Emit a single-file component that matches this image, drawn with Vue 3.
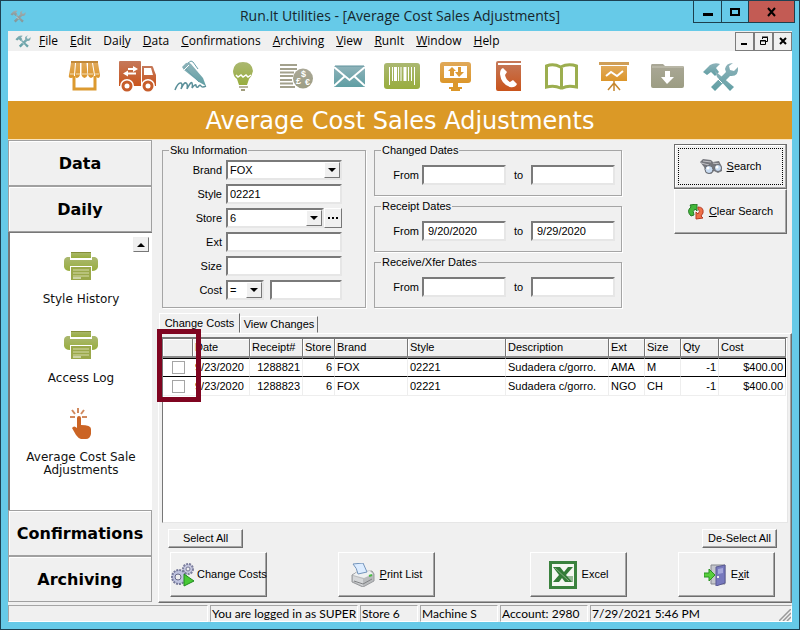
<script setup>
import { h, ref } from 'vue'

// Renders a caption whose access key is marked by a preceding "&".
const Caption = (props) => {
  const at = props.text.indexOf('&')
  if (at < 0) return h('span', props.text)
  return h('span', [props.text.slice(0, at), h('u', props.text[at + 1]), props.text.slice(at + 2)])
}
Caption.props = ['text']

const menus = ['&File', '&Edit', 'Dai&ly', '&Data', '&Confirmations', '&Archiving', '&View', '&RunIt', '&Window', '&Help']

const brand = ref('FOX')
const style = ref('02221')
const store = ref('6')
const ext = ref('')
const size = ref('')
const operator = ref('=')
const cost = ref('')

const ranges = ref([
  { id: 'changed', title: 'Changed Dates', from: '', to: '' },
  { id: 'receipt', title: 'Receipt Dates', from: '9/20/2020', to: '9/29/2020' },
  { id: 'xfer', title: 'Receive/Xfer Dates', from: '', to: '' },
])

const columns = [
  { key: 'pick', title: '', cls: 'c-pick' },
  { key: 'date', title: 'Date', cls: 'c-date' },
  { key: 'receipt', title: 'Receipt#', cls: 'c-receipt num' },
  { key: 'store', title: 'Store', cls: 'c-store num' },
  { key: 'brand', title: 'Brand', cls: 'c-brand' },
  { key: 'style', title: 'Style', cls: 'c-style' },
  { key: 'description', title: 'Description', cls: 'c-desc' },
  { key: 'ext', title: 'Ext', cls: 'c-ext' },
  { key: 'size', title: 'Size', cls: 'c-size' },
  { key: 'qty', title: 'Qty', cls: 'c-qty num' },
  { key: 'cost', title: 'Cost', cls: 'c-cost num' },
]

const rows = ref([
  { picked: false, date: '9/23/2020', receipt: '1288821', store: '6', brand: 'FOX', style: '02221', description: 'Sudadera c/gorro.', ext: 'AMA', size: 'M', qty: '-1', cost: '$400.00' },
  { picked: false, date: '9/23/2020', receipt: '1288823', store: '6', brand: 'FOX', style: '02221', description: 'Sudadera c/gorro.', ext: 'NGO', size: 'CH', qty: '-1', cost: '$400.00' },
])

const pickAll = (value) => rows.value.forEach((row) => { row.picked = value })
const clearSearch = () => {
  style.value = ''
  ext.value = ''
  size.value = ''
  cost.value = ''
  ranges.value.forEach((r) => { r.from = ''; r.to = '' })
}
</script>

<template>
  <div class="window">
    <svg class="defs" width="0" height="0" aria-hidden="true">
      <defs>
        <linearGradient id="gOrange" x1="0" y1="0" x2="0" y2="1"><stop offset="0" stop-color="#e0a95a" /><stop offset="1" stop-color="#dc962a" /></linearGradient>
        <linearGradient id="gRust" x1="0" y1="0" x2="0" y2="1"><stop offset="0" stop-color="#c5795a" /><stop offset="1" stop-color="#c9541c" /></linearGradient>
        <linearGradient id="gTeal" x1="0" y1="0" x2="0" y2="1"><stop offset="0" stop-color="#8fb3ba" /><stop offset="1" stop-color="#5f9ea3" /></linearGradient>
        <linearGradient id="gGreen" x1="0" y1="0" x2="0" y2="1"><stop offset="0" stop-color="#abb871" /><stop offset="1" stop-color="#98ad3e" /></linearGradient>
        <linearGradient id="gStone" x1="0" y1="0" x2="0" y2="1"><stop offset="0" stop-color="#aaa897" /><stop offset="1" stop-color="#9c9d83" /></linearGradient>
        <symbol id="tools" viewBox="0 0 37 32">
          <path d="M1 12 8 5q5-3 10-1l-4 4 3 4-4 4-4-4-4 3z" fill="url(#gTeal)" />
          <path d="m13 11 6 5 13 11-4 4L15 17z" fill="url(#gTeal)" />
          <path d="M31 3q-7 0-8 6l1 3L9 27l4 4 15-15q9 1 8-9l-4 4-4-1-1-4z" fill="url(#gTeal)" />
          <path d="m15 18 5 5" stroke="#fff" stroke-width="1" />
        </symbol>
        <symbol id="greenPrinter" viewBox="0 0 34 28">
          <path d="M7 0h20v6H7z" fill="url(#gGreen)" />
          <path d="M7 0h20v1H7z" fill="#858f38" />
          <path d="M3 5h3v3h22V5h3q3 1 3 4v6q-1 4-6 4v-5H6v5q-5 0-6-4V9q0-3 3-4z" fill="url(#gGreen)" />
          <path d="M7 15h20v13H7z" fill="#9aa84a" />
          <path d="M9 18h16M9 21h16M9 24h16" stroke="#d6dba9" />
          <path d="M9 26h8" stroke="#fff" />
        </symbol>
      </defs>
    </svg>

    <header class="titlebar">
      <svg class="app-icon faded" width="16" height="14"><use href="#tools" /></svg>
      <h1>Run.It Utilities - [Average Cost Sales Adjustments]</h1>
      <div class="win-buttons">
        <button type="button" aria-label="Minimize"><svg width="12" height="12"><path d="M1 7h10v3H1z" fill="#000" /></svg></button>
        <button type="button" aria-label="Maximize"><svg width="12" height="12"><path d="M2 3h8v6H2z" fill="none" stroke="#000" stroke-width="2" /></svg></button>
        <button type="button" class="close" aria-label="Close"><svg width="12" height="12"><path d="m2 2 7 8M9 2l-7 8" stroke="#000" stroke-width="2" /></svg></button>
      </div>
    </header>

    <nav class="menubar">
      <svg class="app-icon" width="16" height="14"><use href="#tools" /></svg>
      <button v-for="m in menus" :key="m" type="button"><Caption :text="m" /></button>
      <div class="mdi">
        <button type="button" aria-label="Minimize document"><svg width="10" height="10"><path d="M1 7h6v2H1z" /></svg></button>
        <button type="button" aria-label="Restore document"><svg width="10" height="10"><path d="M3.500 3V1.500h5v4H7M3 1h6M1.500 4.500h5v4h-5zM1 5h6" fill="none" stroke="#000" /></svg></button>
        <button type="button" aria-label="Close document"><svg width="10" height="10"><path d="m2 2 6 6M8 2 2 8" stroke="#000" stroke-width="2" /></svg></button>
      </div>
    </nav>

    <div class="toolbar">
      <button type="button" aria-label="Store">
        <svg viewBox="0 0 37 32"><path d="M8 16v13h21V16" fill="none" stroke="#dc9a30" stroke-width="3" /><path d="M5 1h27v2H5z" fill="#c1893a" /><path d="M5 3h4l-1 12q0 3-3 3t-2-3zM10 3h4v12q-1 3-3 3t-2-3zM15.500 3h5l1 12q-1 3-3 3t-3-3zM22 3h4l2 12q-1 3-3 3t-3-3zM27 3h5l2 12q0 3-2 3t-3-3z" fill="url(#gOrange)" /><path d="M4 14h4M10 14h4M16 14h5M22 14h5M29 14h4" stroke="#f4dfb8" /></svg>
      </button>
      <button type="button" aria-label="Shipping">
        <svg viewBox="0 0 37 32"><path d="M1 1h20q1 0 1 1v24H0V2q0-1 1-1z" fill="url(#gRust)" /><path d="M23 6h10q1 0 2 4l2 5v11H23z" fill="url(#gRust)" /><path d="M25 8h7l2 7h-9z" fill="#fff" /><circle cx="8" cy="26" r="7" fill="#fff" /><circle cx="29" cy="26" r="7" fill="#fff" /><circle cx="8" cy="26" r="4" fill="#fff" stroke="#c75d2b" stroke-width="3" /><circle cx="29" cy="26" r="4" fill="#fff" stroke="#c75d2b" stroke-width="3" /><path d="M9 8h5V6l5 3-5 3v-2H9zM17 12.500H9v-2l-5 3 5 3v-2h8z" fill="#fff" /></svg>
      </button>
      <button type="button" aria-label="Sign">
        <svg viewBox="0 0 37 32"><path d="m10 7 4-4q3-1 5 1l12 14 3 8-7-4L12 10z" fill="url(#gTeal)" /><path d="m13 8 14 14M16 3l3-2 2 1 5 7" fill="none" stroke="#699faa" stroke-width="1" /><path d="m12 10 5-5" stroke="#fff" /><path d="M3 30q3-8 6-7 2 1 0 6 3-7 5-6 2 1 1 6 4-8 5-6 1 2 0 5 3-4 4-3 0 3 2 2 2-3 3-1 1 2 5 0" fill="none" stroke="#5a8f99" stroke-width="1.500" /></svg>
      </button>
      <button type="button" aria-label="Ideas">
        <svg viewBox="0 0 37 32"><path d="M18 2q9 0 10 9-1 5-4 8l-2 6h-8l-2-6q-4-3-4-8 1-9 10-9z" fill="url(#gGreen)" /><path d="m11 15 2 2 3-2 2 2 3-2 2 2 3-2" fill="none" stroke="#fff" stroke-width="1.500" /><path d="M14 27h9" stroke="#a09d7c" stroke-width="1.500" /><path d="M16 30h4" stroke="#a09d7c" stroke-width="2" /></svg>
      </button>
      <button type="button" aria-label="Currency">
        <svg viewBox="0 0 37 32"><path d="M2 5h17M2 9h17M2 12.500h14M2 16h13M2 20h12M2 23.500h13M2 27h15" stroke="#a3a18d" stroke-width="2" /><circle cx="25" cy="18.500" r="10" fill="url(#gStone)" /><g fill="#fff" font-family="Liberation Sans, sans-serif" font-weight="bold" font-size="9"><text x="23" y="17">$</text><text x="18" y="24">£</text><text x="27" y="25">€</text></g></svg>
      </button>
      <button type="button" aria-label="Mail">
        <svg viewBox="0 0 37 32"><path d="M3 6h31v21H3z" fill="url(#gTeal)" /><path d="m3 7 15.500 13L34 7M3 26l11-10M34 26 23 16" fill="none" stroke="#fff" stroke-width="2" /><path d="M4 6h29" stroke="#5e929c" /></svg>
      </button>
      <button type="button" aria-label="Barcode">
        <svg viewBox="0 0 37 32"><rect y="3" width="36" height="26" rx="3" fill="url(#gGreen)" /><path d="M5.500 7v18M30.500 7v18" stroke="#fff" /><path d="M8.500 7v14M14.500 7v14M17 7v14M27.500 7v14M24.500 7v14" stroke="#fff" /><path d="M11.500 7v14M21 7v14" stroke="#fff" stroke-width="3" /></svg>
      </button>
      <button type="button" aria-label="Sync">
        <svg viewBox="0 0 37 32"><rect x="3" y="2" width="31" height="21" rx="3" fill="url(#gOrange)" /><path d="M7 6h23v12H7z" fill="#fff" /><path d="M16 23h5v4h4v2H12v-2h4zM14 28h9v3h-9z" fill="#dc9729" /><path d="m15 7 4 4h-2v5h-4v-5h-2zM21 7h3v5h3l-5 5-4-5h3z" fill="#dc9a35" /></svg>
      </button>
      <button type="button" aria-label="Phone book">
        <svg viewBox="0 0 37 32"><path d="M8 1h23v2H8v1h23v27H8q-2 0-2-2V3q0-2 2-2z" fill="url(#gRust)" /><path d="M8 4.500h23" stroke="#fff" /><path d="m13 8 4 4-2 3q1 5 5 7l3-2 4 4q-2 4-7 3-9-3-10-13 0-5 3-6z" fill="#fff" /></svg>
      </button>
      <button type="button" aria-label="Catalog">
        <svg viewBox="0 0 37 32"><path d="M3.500 6q7-3 14 1 8-4 16-1v21q-9-2-14 1h-2q-6-3-14-1z" fill="#fff" stroke="#9cae4f" stroke-width="3" /><path d="M18.500 8v20" stroke="#9cae4f" stroke-width="3" /></svg>
      </button>
      <button type="button" aria-label="Presentation">
        <svg viewBox="0 0 37 32"><path d="M3 2h30v3H3z" fill="#cf9e57" /><path d="M5 6h26v15H5z" fill="url(#gOrange)" /><path d="m10 16 5-4 6 4 6-5" fill="none" stroke="#fff" stroke-width="2" /><path d="M18 21v10M18 23l-6 7M18 23l6 7" stroke="#c5862e" stroke-width="1.500" /></svg>
      </button>
      <button type="button" aria-label="Download">
        <svg viewBox="0 0 37 32"><path d="M3 4h11l2 2h18q1 0 1 2v18q0 2-2 2H4q-2 0-2-2V6q0-2 1-2z" fill="url(#gStone)" /><path d="M3 7h31" stroke="#c8c6b6" /><path d="M16 11h5v6h4l-7 7-6-7h4z" fill="#fff" /></svg>
      </button>
      <button type="button" aria-label="Tools"><svg><use href="#tools" /></svg></button>
    </div>

    <h2 class="banner">Average Cost Sales Adjustments</h2>

    <div class="body">
      <aside class="sidebar">
        <button type="button" class="section">Data</button>
        <button type="button" class="section">Daily</button>
        <div class="shortcuts">
          <button type="button" class="scroll-up" aria-label="Scroll up"><svg width="8" height="4"><path d="M4 0 8 4H0z" /></svg></button>
          <a href="#"><svg width="34" height="32" viewBox="0 -2 34 32"><use href="#greenPrinter" width="34" height="28" /></svg>Style History</a>
          <a href="#"><svg width="34" height="32" viewBox="0 -2 34 32"><use href="#greenPrinter" width="34" height="28" /></svg>Access Log</a>
          <a href="#">
            <svg width="22" height="32" viewBox="0 0 22 32"><path d="M7 10q0-2 2-2t2 2v7q10 0 10 4v5q-1 5-5 5h-5q-3-1-5-4l-4-7q2-3 5 0z" fill="#cb6425" /><path d="M8 0v5M2 2l3 4M14 2l-3 4M0 9h5M12 9h5" stroke="#d18a5f" stroke-width="2" /></svg>
            Average Cost Sale Adjustments
          </a>
        </div>
        <button type="button" class="section">Confirmations</button>
        <button type="button" class="section">Archiving</button>
      </aside>

      <main>
        <form class="search" @submit.prevent>
          <fieldset class="sku">
            <legend>Sku Information</legend>
            <label for="brand">Brand</label>
            <div class="combo field">
              <select id="brand" v-model="brand"><option>FOX</option></select>
              <span class="arrow"><svg width="8" height="4"><path d="M0 0h8L4 4z" /></svg></span>
            </div>
            <label for="style">Style</label>
            <input id="style" v-model="style" class="field" type="text">
            <label for="store">Store</label>
            <div class="with-more">
              <div class="combo field">
                <select id="store" v-model="store"><option>6</option></select>
                <span class="arrow"><svg width="8" height="4"><path d="M0 0h8L4 4z" /></svg></span>
              </div>
              <button type="button" class="more" aria-label="Browse stores"><svg width="10" height="2"><path d="M0 0h2v2H0zM4 0h2v2H4zM8 0h2v2H8z" /></svg></button>
            </div>
            <label for="ext">Ext</label>
            <input id="ext" v-model="ext" class="field" type="text">
            <label for="size">Size</label>
            <input id="size" v-model="size" class="field" type="text">
            <label for="cost">Cost</label>
            <div class="cost">
              <div class="combo field">
                <select v-model="operator" aria-label="Cost comparison"><option>=</option></select>
                <span class="arrow"><svg width="8" height="4"><path d="M0 0h8L4 4z" /></svg></span>
              </div>
              <input id="cost" v-model="cost" class="field" type="text">
            </div>
          </fieldset>

          <div class="ranges">
            <fieldset v-for="r in ranges" :key="r.id" class="range">
              <legend>{{ r.title }}</legend>
              <label :for="r.id + '-from'">From</label>
              <input :id="r.id + '-from'" v-model="r.from" class="field" type="text">
              <label :for="r.id + '-to'" class="to">to</label>
              <input :id="r.id + '-to'" v-model="r.to" class="field" type="text">
            </fieldset>
          </div>

          <div class="actions">
            <button type="submit" class="btn default">
              <svg width="22" height="16" viewBox="0 0 22 16"><path d="M0 3 3 0l8 1 2 2 6-1 3 6v4l-4 2-4-2-3 3-5-1-2-6z" fill="#76777d" /><path d="m3 2 8 1M1 4l8 2M13 4l6 1" stroke="#c4c4c8" /><circle cx="9" cy="10.500" r="4" fill="#c9dcf2" stroke="#66686e" /><circle cx="18" cy="9" r="3.500" fill="#c9dcf2" stroke="#66686e" /><circle cx="8" cy="9" r="1.500" fill="#fff" /><circle cx="17" cy="8" r="1.500" fill="#fff" /></svg>
              <Caption text="&Search" />
            </button>
            <button type="button" class="btn" @click="clearSearch">
              <svg width="16" height="16" viewBox="0 0 16 16"><path d="M3 12Q-2 7 3 3L2 1l7-1v7L7 5Q4 7 6 11z" fill="#43b73b" stroke="#267a26" /><path d="M10 3q6 0 5 6l-2 3 2 2-7 1V8l2 2q3-3 0-5z" fill="#ee7048" stroke="#b63c24" /></svg>
              <Caption text="&Clear Search" />
            </button>
          </div>
        </form>

        <div class="tabs" role="tablist">
          <button type="button" role="tab" aria-selected="true" class="active">Change Costs</button>
          <button type="button" role="tab" aria-selected="false">View Changes</button>
        </div>

        <section class="panel">
          <div class="grid">
            <table>
              <thead>
                <tr><th v-for="c in columns" :key="c.key" :class="c.cls">{{ c.title }}</th></tr>
              </thead>
              <tbody>
                <tr v-for="(row, i) in rows" :key="row.receipt" :class="{ current: i === 0 }">
                  <td v-for="c in columns" :key="c.key" :class="c.cls">
                    <input v-if="c.key === 'pick'" v-model="row.picked" type="checkbox" :aria-label="'Select receipt ' + row.receipt">
                    <template v-else>{{ row[c.key] }}</template>
                  </td>
                </tr>
              </tbody>
            </table>
            <div class="highlight"></div>
          </div>

          <div class="pickers">
            <button type="button" class="btn small" @click="pickAll(true)">Select All</button>
            <button type="button" class="btn small" @click="pickAll(false)">De-Select All</button>
          </div>

          <div class="commands">
            <button type="button" class="btn tight">
              <svg width="24" height="24" viewBox="0 0 24 24"><circle cx="17" cy="6" r="5" fill="#c5c7df" stroke="#7d7f9e" stroke-width="2" stroke-dasharray="2 1" /><circle cx="17" cy="6" r="2" fill="#f0f0f0" stroke="#777996" /><circle cx="8" cy="14" r="7" fill="#bfc3df" stroke="#777a9b" stroke-width="2" stroke-dasharray="2 1" /><circle cx="7" cy="14" r="3" fill="#eee" stroke="#666989" /><path d="m13 11 10 7-10 5z" fill="#48c936" stroke="#218b20" /></svg>
              <Caption text="Change Costs" />
            </button>
            <button type="button" class="btn">
              <svg width="24" height="24" viewBox="0 0 24 24"><path d="m1 12 5-3 15-1 2 3v7l-11 6-11-5z" fill="#b9bbbd" stroke="#999b9e" /><path d="m2 12 11 3 9-4-3-3-13 1z" fill="#eef0f1" /><path d="m2 13 10 3v7L2 18z" fill="#d5d7d9" /><path d="m2 1 10-1 4 9-9 2Q6 5 2 1z" fill="#dcecff" stroke="#7394bb" /><path d="m3 18 9 3 9-5" fill="none" stroke="#808284" /><path d="m18 13 3-1" stroke="#4aba44" stroke-width="2" /></svg>
              <Caption text="&Print List" />
            </button>
            <button type="button" class="btn">
              <svg width="28" height="28" viewBox="0 0 28 28"><path d="M1.500 1.500h25v25h-25z" fill="#f5f7f2" stroke="#3b823e" stroke-width="3" /><path d="M4 6h7l4 5 4-5h5l-7 8 6 7h-7l-3-4-3 4H4l6-7z" fill="#347c38" /><path d="m6 7 14 13" stroke="#83ae80" /><path d="M18 16h6M20 18h4M21 20h3" stroke="#347c38" /></svg>
              <Caption text="Excel" />
            </button>
            <button type="button" class="btn">
              <svg width="22" height="22" viewBox="0 0 22 22"><path d="M7 1h14v19H7z" fill="#c4c6cc" stroke="#85878f" /><path d="m12 3 9-2v18l-9 3z" fill="#7779bd" stroke="#5b5b94" /><path d="m14 5 5-1v5l-5 1z" fill="#a5a7db" /><path d="M14 12v2" stroke="#eee" stroke-width="2" /><path d="M0 9h5V5l6 6-6 6v-4H0z" fill="#58ce3c" stroke="#299323" /></svg>
              <Caption text="E&xit" />
            </button>
          </div>
        </section>
      </main>
    </div>

    <footer class="status">
      <span class="s-blank"></span>
      <span class="s-user">You are logged in as SUPER</span>
      <span class="s-store">Store 6</span>
      <span class="s-machine">Machine S</span>
      <span class="s-account">Account: 2980</span>
      <span class="s-time">7/29/2021 5:46 PM<svg width="12" height="12"><path d="M0 12 12 0M4 12l8-8M8 12l4-4" stroke="#999" stroke-width="1.500" /></svg></span>
    </footer>
  </div>
</template>

<style>
body {
  margin: 0;
}
</style>

<style scoped>
* {
  box-sizing: border-box;
}
button,
input,
select {
  margin: 0;
  padding: 0;
  border: 0;
  background: none;
  border-radius: 0;
  color: inherit;
  font: inherit;
  appearance: none;
  outline: none;
}
svg {
  flex: none;
  display: block;
}
.defs {
  position: absolute;
}
.window {
  display: flex;
  flex-direction: column;
  min-height: 100vh;
  padding: 0 7px 7px;
  border: 1px solid #1d4152;
  background: #66cae8;
  color: #000;
  font: 11px/13px "Liberation Sans", Arial, sans-serif;
}
.titlebar {
  display: grid;
  grid-template-columns: 1fr auto 1fr;
  height: 30px;
}
.titlebar .app-icon {
  margin: 8px 0 0 2px;
}
.faded {
  filter: grayscale(0.7);
}
h1 {
  margin: 0;
  color: #17262c;
  font: 14px/30px "Open Sans", "Noto Sans", sans-serif;
}
.win-buttons {
  display: flex;
  justify-self: end;
  align-self: start;
  margin-right: -3px;
  border: 1px solid #1d3f4d;
  border-top: 0;
}
.win-buttons button {
  display: grid;
  place-items: center;
  width: 27px;
  height: 21px;
}
.win-buttons button + button {
  border-left: 1px solid #1d3f4d;
}
.win-buttons .close {
  width: 46px;
  background: #c35b54;
}
.menubar {
  display: flex;
  align-items: center;
  gap: 12px;
  height: 20px;
  padding-left: 7px;
  background: #f0f0f0;
  font: 12px/20px "Open Sans", "Noto Sans", sans-serif;
}
.menubar .app-icon {
  margin-right: -4px;
}
u {
  text-underline-offset: 2px;
}
.mdi {
  display: flex;
  margin-left: auto;
}
.mdi button {
  display: grid;
  place-items: center;
  width: 19px;
  height: 19px;
  border: 1px solid #7c7c7c;
}
.toolbar {
  display: flex;
  height: 50px;
  padding-left: 50px;
  background: #fff;
}
.toolbar button {
  display: grid;
  place-items: center;
  width: 53px;
}
.toolbar svg {
  width: 37px;
  height: 32px;
}
.banner {
  margin: 0;
  padding-top: 2px;
  background: #db9926;
  color: #fff;
  font: 24px/36px "DejaVu Sans", Verdana, sans-serif;
  text-align: center;
  border-bottom: 1px solid #f9e4bd;
}
.body {
  display: flex;
  flex: 1;
  gap: 6px;
  background: #f0f0f0;
}
.sidebar {
  display: flex;
  flex-direction: column;
  width: 144px;
  margin-bottom: 2px;
  font-family: "DejaVu Sans", Verdana, sans-serif;
}
.section {
  height: 46px;
  border: 1px solid #a0a0a0;
  box-shadow: inset 1px 1px #fff;
  font-size: 16px;
  font-weight: bold;
}
.shortcuts {
  position: relative;
  display: flex;
  flex: 1;
  flex-direction: column;
  align-items: center;
  gap: 23px;
  padding: 17px 12px;
  border-left: 2px solid #777;
  border-top: 1px solid #777;
  background: #fff;
  font-size: 12px;
}
.shortcuts a {
  display: flex;
  flex-direction: column;
  align-items: center;
  gap: 11px;
  color: #111;
  text-align: center;
  text-decoration: none;
}
.scroll-up {
  position: absolute;
  top: 4px;
  right: 3px;
  display: grid;
  place-items: center;
  width: 16px;
  height: 15px;
  border: 1px solid;
  border-color: #eee #777 #777 #eee;
  background: #f0f0f0;
}
main {
  display: flex;
  flex: 1;
  flex-direction: column;
  min-width: 0;
}
.search {
  display: flex;
  gap: 8px;
  padding: 4px 5px 0 4px;
}
fieldset {
  min-width: 0;
  margin: 0;
  padding: 0;
  border: 1px solid #a5a5a5;
  box-shadow: 1px 1px #fff;
}
legend {
  margin-left: 6px;
  padding: 0 1px;
}
.sku {
  display: grid;
  grid-template-columns: 59px 116px;
  grid-auto-rows: 20px;
  gap: 4px;
  align-items: center;
  width: 204px;
  padding: 3px 0 6px;
}
.sku label,
.range label {
  text-align: right;
}
.field {
  width: 100%;
  height: 20px;
  min-width: 0;
  padding-left: 2px;
  border: 2px solid;
  border-color: #7a7a7a #e6e6e6 #e6e6e6 #7a7a7a;
  background: #fff;
}
.combo {
  display: grid;
  grid-template-columns: 1fr 16px;
}
.combo.field {
  padding: 0;
}
.combo select {
  grid-area: 1 / 1 / 2 / 3;
  min-width: 0;
  padding-left: 2px;
}
.arrow,
.more {
  display: grid;
  place-items: center;
  border: 1px solid;
  border-color: #fff #777 #777 #fff;
  background: #f0f0f0;
}
.arrow {
  grid-area: 1 / 2;
  pointer-events: none;
}
.with-more {
  display: grid;
  grid-template-columns: 1fr 18px;
}
.cost {
  display: grid;
  grid-template-columns: 38px 1fr;
  gap: 6px;
}
.ranges {
  display: flex;
  flex-direction: column;
  gap: 4px;
}
.range {
  display: grid;
  grid-template-columns: 44px 84px 19px 84px;
  gap: 3px;
  align-items: center;
  width: 248px;
  padding: 8px 0 10px;
}
.range .to {
  text-align: center;
}
.range .field {
  padding-left: 4px;
}
.actions {
  width: 113px;
  margin-left: auto;
}
.btn {
  display: flex;
  align-items: center;
  justify-content: center;
  gap: 5px;
  width: 97px;
  height: 45px;
  border: 1px solid;
  border-color: #fff #6d6d6d #6d6d6d #fff;
  box-shadow: inset -1px -1px #a5a5a5;
  background: #f0f0f0;
  white-space: nowrap;
}
.actions .btn {
  width: 100%;
}
.btn.default {
  border-color: #6d6d6d;
  box-shadow: inset -1px -1px #a5a5a5, inset 1px 1px #fff;
  outline: 1px dotted #000;
  outline-offset: -5px;
}
.btn.small {
  width: 75px;
  height: 19px;
}
.btn.tight {
  justify-content: flex-start;
  gap: 2px;
}
.tabs {
  display: flex;
  align-items: flex-end;
  height: 25px;
  padding-left: 1px;
}
.tabs button {
  width: 78px;
  height: 17px;
  border: 1px solid;
  border-color: #fff #6d6d6d transparent #fff;
}
.tabs .active {
  width: 81px;
  height: 20px;
}
.panel {
  display: flex;
  flex: 1;
  flex-direction: column;
  margin-bottom: 1px;
  padding: 3px 3px 5px;
  border: 1px solid;
  border-color: #fff #6d6d6d #6d6d6d #fff;
  box-shadow: inset -1px -1px #a5a5a5;
}
.grid {
  position: relative;
  flex: 1;
  padding-right: 1px;
  border: 1px solid;
  border-color: #777 #e6e6e6 #e6e6e6 #777;
  background: #fff;
}
table {
  width: 100%;
  border-spacing: 0;
  table-layout: fixed;
}
th,
td {
  padding: 0 2px;
  white-space: nowrap;
  text-align: left;
}
th {
  height: 20px;
  border-right: 1px solid #777;
  border-bottom: 2px solid #8a8a8a;
  border-top: 1px solid #777;
  box-shadow: inset 1px 1px #fff;
  background: #f0f0f0;
  font-weight: normal;
}
td {
  height: 19px;
  border-right: 1px solid #eee;
  border-bottom: 1px solid #eee;
}
.current td {
  border-top: 1px solid #000;
  border-bottom: 1px solid #000;
}
.current td:last-child {
  border-right-color: #000;
}
td.num {
  text-align: right;
}
.c-pick { width: 30px; }
.c-date { width: 57px; }
.c-receipt { width: 53px; }
.c-store { width: 32px; }
.c-brand { width: 73px; }
.c-style { width: 98px; }
.c-desc { width: 103px; }
.c-ext { width: 36px; }
.c-size { width: 36px; }
.c-qty { width: 38px; }
td.c-pick {
  border-right: 0;
}
.c-pick input {
  display: block;
  width: 13px;
  height: 13px;
  margin: 0 auto;
  border: 1px solid #a5a5a5;
  background: #fff;
}
.c-pick input:checked {
  background: #444;
}
.highlight {
  position: absolute;
  top: -9px;
  left: -6px;
  width: 44px;
  height: 73px;
  border: 5px solid #7f0420;
  pointer-events: none;
}
.pickers {
  display: flex;
  justify-content: space-between;
  padding: 6px 11px 4px 6px;
}
.commands {
  display: grid;
  grid-template-columns: 168fr 192fr 148fr 97px;
  padding: 0 13px 0 8px;
}
.status {
  display: flex;
  gap: 2px;
  height: 18px;
  padding-top: 1px;
  background: #f0f0f0;
  font: 12px/15px Lato, "Open Sans", sans-serif;
  white-space: nowrap;
}
.status span {
  overflow: hidden;
  padding-left: 1px;
  border: 1px solid;
  border-color: #a5a5a5 #fff #fff #a5a5a5;
}
.s-blank { width: 200px; }
.s-user { width: 148px; }
.s-store { width: 58px; }
.s-machine { width: 78px; }
.s-account { width: 88px; }
.status .s-time {
  display: flex;
  flex: 1;
  align-items: flex-end;
  justify-content: space-between;
}
</style>
